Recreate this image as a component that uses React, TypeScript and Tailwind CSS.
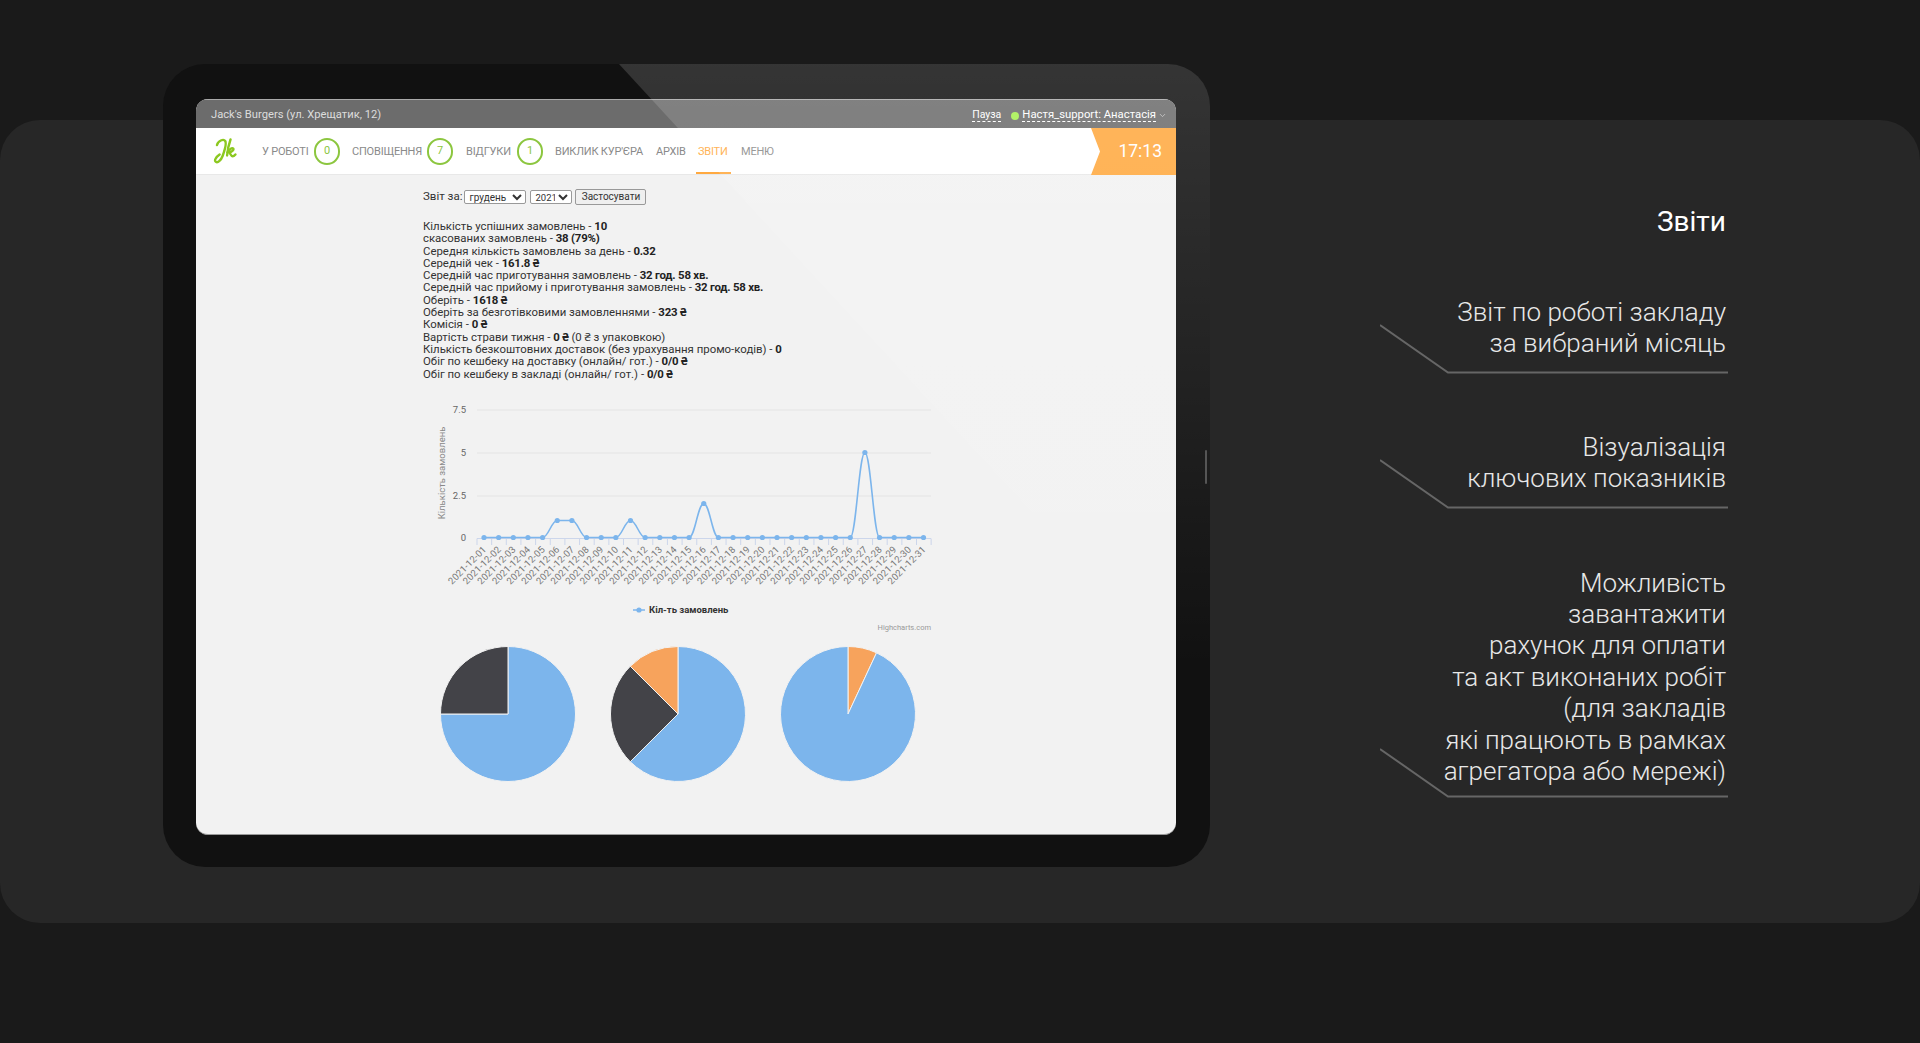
import { ChevronDown } from 'lucide-react';

const BLUE = '#7cb5ec';
const DARK = '#434348';
const ORANGE = '#f7a35c';

// values per day of the month (1..31)
const orders = Array.from({ length: 31 }, (_, i) => {
  const day = i + 1;
  if (day === 6 || day === 7 || day === 11) return 1;
  if (day === 16) return 2;
  if (day === 27) return 5;
  return 0;
});

const stats: [string, string, string?][] = [
  ['Кількість успішних замовлень - ', '10'],
  ['скасованих замовлень - ', '38 (79%)'],
  ['Середня кількість замовлень за день - ', '0.32'],
  ['Середній чек - ', '161.8 ₴'],
  ['Середній час приготування замовлень - ', '32 год. 58 хв.'],
  ['Середній час прийому і приготування замовлень - ', '32 год. 58 хв.'],
  ['Оберіть - ', '1618 ₴'],
  ['Оберіть за безготівковими замовленнями - ', '323 ₴'],
  ['Комісія - ', '0 ₴'],
  ['Вартість страви тижня - ', '0 ₴', ' (0 ₴ з упаковкою)'],
  ['Кількість безкоштовних доставок (без урахування промо-кодів) - ', '0'],
  ['Обіг по кешбеку на доставку (онлайн/ гот.) - ', '0/0 ₴'],
  ['Обіг по кешбеку в закладі (онлайн/ гот.) - ', '0/0 ₴'],
];

const pointX = (i: number) => 484 + i * 14.65;
const pointY = (v: number) => 537.5 - v * 17;

// same smoothing as a highcharts spline
function splinePath() {
  const pts = orders.map((v, i) => ({ x: pointX(i), y: pointY(v) }));
  const ctrl = pts.map((p, i) => {
    const prev = pts[i - 1];
    const next = pts[i + 1];
    if (!prev || !next) return { lx: p.x, ly: p.y, rx: p.x, ry: p.y };
    const lx = (1.5 * p.x + prev.x) / 2.5;
    const rx = (1.5 * p.x + next.x) / 2.5;
    let ly = (1.5 * p.y + prev.y) / 2.5;
    let ry = (1.5 * p.y + next.y) / 2.5;
    const c = ((ry - ly) * (rx - p.x)) / (rx - lx) + p.y - ry;
    ly += c;
    ry += c;
    if (ly > prev.y && ly > p.y) {
      ly = Math.max(prev.y, p.y);
      ry = 2 * p.y - ly;
    } else if (ly < prev.y && ly < p.y) {
      ly = Math.min(prev.y, p.y);
      ry = 2 * p.y - ly;
    }
    if (ry > next.y && ry > p.y) {
      ry = Math.max(next.y, p.y);
      ly = 2 * p.y - ry;
    } else if (ry < next.y && ry < p.y) {
      ry = Math.min(next.y, p.y);
      ly = 2 * p.y - ry;
    }
    return { lx, ly, rx, ry };
  });
  let d = `M${pts[0].x} ${pts[0].y}`;
  for (let i = 1; i < pts.length; i++) {
    d += ` C${ctrl[i - 1].rx} ${ctrl[i - 1].ry} ${ctrl[i].lx} ${ctrl[i].ly} ${pts[i].x} ${pts[i].y}`;
  }
  return d;
}

function LineChart() {
  return (
    <svg viewBox="423 400 510 235" className="block w-[510px] h-[235px] mt-[20px]" style={{ fontFamily: 'Roboto, sans-serif' }}>
      {[410, 453, 496].map((y) => (
        <line key={y} x1="477" x2="931" y1={y} y2={y} stroke="#e4e4e4" strokeWidth="1.2" />
      ))}
      {[['7.5', 413], ['5', 456], ['2.5', 499], ['0', 541]].map(([t, y]) => (
        <text key={t} x="466" y={y} textAnchor="end" fontSize="9.5" fill="#666">{t}</text>
      ))}
      <text transform="translate(445 473) rotate(-90)" textAnchor="middle" fontSize="9.5" fill="#888">Кількість замовлень</text>
      <line x1="477" x2="931" y1="538.5" y2="538.5" stroke="#ccd6eb" />
      {Array.from({ length: 32 }, (_, i) => (
        <line key={i} x1={477 + i * 14.65} x2={477 + i * 14.65} y1="538.5" y2="545" stroke="#ccd6eb" />
      ))}
      <path d={splinePath()} fill="none" stroke={BLUE} strokeWidth="1.6" />
      {orders.map((v, i) => (
        <circle key={i} cx={pointX(i)} cy={pointY(v)} r="2.6" fill={BLUE} />
      ))}
      {orders.map((_, i) => (
        <text
          key={i}
          transform={`translate(${pointX(i) + 3} 550) rotate(-45)`}
          textAnchor="end"
          fontSize="9.5"
          letterSpacing="0.15"
          fill="#777"
        >
          {`2021-12-${String(i + 1).padStart(2, '0')}`}
        </text>
      ))}
      <line x1="633" x2="645" y1="610" y2="610" stroke={BLUE} strokeWidth="1.5" />
      <circle cx="639" cy="610" r="2.6" fill={BLUE} />
      <text x="649" y="613" fontSize="9.5" fontWeight="700" fill="#333">Кіл-ть замовлень</text>
      <text x="931" y="630" textAnchor="end" fontSize="7.5" fill="#999">Highcharts.com</text>
    </svg>
  );
}

function slice(cx: number, cy: number, r: number, from: number, to: number) {
  const pt = (a: number) => {
    const rad = (a * Math.PI) / 180;
    return `${cx + r * Math.sin(rad)} ${cy - r * Math.cos(rad)}`;
  };
  return `M${cx} ${cy} L${pt(from)} A${r} ${r} 0 ${to - from > 180 ? 1 : 0} 1 ${pt(to)} Z`;
}

const pies: { cx: number; parts: [number, number, string][] }[] = [
  { cx: 508, parts: [[0, 270, BLUE], [270, 360, DARK]] },
  { cx: 678, parts: [[0, 225, BLUE], [225, 315, DARK], [315, 360, ORANGE]] },
  { cx: 848, parts: [[0, 25, ORANGE], [25, 360, BLUE]] },
];

function Pies() {
  return (
    <svg viewBox="423 635 510 150" className="block w-[510px] h-[150px]">
      {pies.map((p) =>
        p.parts.map(([from, to, color]) => (
          <path key={`${p.cx}-${from}`} d={slice(p.cx, 714, 67.5, from, to)} fill={color} stroke="#f2f2f2" strokeWidth="1" strokeLinejoin="round" />
        )),
      )}
    </svg>
  );
}

function Logo() {
  return (
    <svg viewBox="0 0 24 26" className="w-[24px] h-[26px] text-[#8cc820]" fill="none" stroke="currentColor" strokeWidth="2.4" strokeLinecap="round" strokeLinejoin="round">
      <path d="M4 7C5 2.800 10.500 .5 12.200 3c1.500 2.400-.6 9.500-2.600 15-1.500 4-4.600 7.200-6.800 5.800-1.900-1.300.4-5 3.800-7.300" />
      <path d="M17.500 1.500c-1.400 4-3 10-3.400 16" />
      <path d="M14.400 14.500c1.400-3 4.600-5.300 5.800-3.900 1 1.300-1.600 3.300-4 3.700 1.200 1 1.600 4 3.400 4 1 0 2-.8 2.800-1.800" />
    </svg>
  );
}

function Badge({ n }: { n: number }) {
  return (
    <span className="ml-[5px] flex h-[27px] w-[26px] items-center justify-center rounded-full border-2 border-[#8cc63f] text-[11px] text-[#8cc63f]">
      {n}
    </span>
  );
}

function NavBar() {
  const item = 'text-[11px] tracking-[-0.2px] text-[#8a8a8a] whitespace-nowrap pt-[2px]';
  return (
    <div className="relative flex h-[47px] items-center bg-white pl-[17px] border-b border-[#e8e8e8]">
      <Logo />
      <span className={`${item} ml-[25px] w-[47px]`}>У РОБОТІ</span>
      <Badge n={0} />
      <span className={`${item} ml-[12px] w-[70px]`}>СПОВІЩЕННЯ</span>
      <Badge n={7} />
      <span className={`${item} ml-[13px] w-[44px]`}>ВІДГУКИ</span>
      <span className="ml-[2px]"><Badge n={1} /></span>
      <span className={`${item} ml-[12px] w-[88px]`}>ВИКЛИК КУР'ЄРА</span>
      <span className={`${item} ml-[13px] w-[29px]`}>АРХІВ</span>
      <span className={`${item} ml-[13px] w-[30px] !text-[#ffa940]`}>ЗВІТИ</span>
      <span className={`${item} ml-[13px]`}>МЕНЮ</span>
      <span className="absolute bottom-0 left-[500px] h-[2px] w-[35px] bg-[#ffa940]" />
      <div className="absolute right-0 top-0 flex h-[47px] w-[85px] items-center justify-end bg-[#ffa940] pr-[14px] text-[17.500px] text-white [clip-path:polygon(0_0,100%_0,100%_100%,0_100%,9px_50%)]">
        17:13
      </div>
    </div>
  );
}

function Screen() {
  return (
    <div className="h-[736px] w-[980px] overflow-hidden rounded-[12px] bg-[#f2f2f2] border-b border-[#999]" style={{ fontFamily: 'Roboto, "Noto Sans", sans-serif' }}>
      <div className="flex h-[29px] items-center justify-between border-t border-[#aaa] bg-[#6c6c6c] pl-[15px] pr-[9px] pt-[3px] text-[11.200px] text-[#dcdcdc]">
        <span>Jack's Burgers (ул. Хрещатик, 12)</span>
        <div className="flex items-center">
          <span className="border-b border-dashed border-white text-[10.500px] leading-[12px] text-white">Пауза</span>
          <span className="ml-[10px] h-[8px] w-[8px] rounded-full bg-[#a6f050]" />
          <span className="ml-[3px] border-b border-dashed border-white text-[11.300px] leading-[12px] text-white">Настя_support: Анастасія</span>
          <ChevronDown size={9} className="ml-[2px] text-[#ccc]" />
        </div>
      </div>
      <NavBar />
      <div className="pl-[227px] pt-[13px] text-[#333]">
        <div className="flex h-[17px] items-center text-[11.500px]">
          <span className="mr-[2px]">Звіт за:</span>
          <select defaultValue="12" className="h-[14px] w-[62px] border border-[#999] rounded-[2px] bg-white text-[10px] leading-none">
            <option value="12">грудень</option>
          </select>
          <select defaultValue="2021" className="ml-[4px] h-[14px] w-[42px] border border-[#999] rounded-[2px] bg-white px-0 text-[9.500px] leading-none">
            <option value="2021">2021</option>
          </select>
          <button className="ml-[3px] h-[16px] w-[71px] border border-[#999] rounded-[2px] bg-[#efefef] text-[10px] leading-none">Застосувати</button>
        </div>
        <div className="mt-[15px] text-[11.400px] leading-[12.300px] whitespace-nowrap">
          {stats.map(([label, value, tail]) => (
            <div key={label}>
              {label}
              <b className="text-[#222] tracking-[-0.2px]">{value}</b>
              {tail}
            </div>
          ))}
        </div>
        <LineChart />
        <Pies />
      </div>
    </div>
  );
}

function Tablet() {
  return (
    <div className="relative -mt-[56px] ml-[163px] h-[803px] w-[1047px] shrink-0 overflow-hidden rounded-[42px] bg-[#111] pt-[35px] pl-[33px]">
      <Screen />
      {/* blik on the glass */}
      <div className="pointer-events-none absolute inset-0 bg-gradient-to-b from-white/15 to-white/0 to-[75%] [clip-path:polygon(456px_0,100%_0,100%_642px)]" />
      <div className="absolute right-[3px] top-[386px] h-[34px] w-[2px] rounded-full bg-[#555]" />
    </div>
  );
}

function Callout({ children, className, lineClass }: { children: React.ReactNode; className: string; lineClass: string }) {
  return (
    <div className={`relative text-right ${className}`}>
      {children}
      <svg viewBox="0 0 348 50" className={`absolute -right-[2px] h-[50px] w-[348px] ${lineClass}`}>
        <path d="M0 1L68 48.500H348" fill="none" stroke="#666" strokeWidth="2" />
      </svg>
    </div>
  );
}

export default function App() {
  return (
    <div className="h-[1043px] overflow-hidden bg-[#1a1a1a] pt-[120px]">
      <div className="flex h-[803px] rounded-[40px] bg-[#272727]">
        <Tablet />
        <div className="ml-auto w-[700px] pr-[194px] font-light text-[26px] leading-[31.400px] text-[#e8e8e8]" style={{ fontFamily: 'Roboto, sans-serif' }}>
          <div className="mt-[84px] text-right text-[28px] font-normal leading-[36px] text-white">Звіти</div>
          <Callout className="mt-[57px]" lineClass="-bottom-[14px]">
            Звіт по роботі закладу<br />за вибраний місяць
          </Callout>
          <Callout className="mt-[72px]" lineClass="-bottom-[14px]">
            Візуалізація<br />ключових показників
          </Callout>
          <Callout className="mt-[73px]" lineClass="-bottom-[11px]">
            Можливість<br />завантажити<br />рахунок для оплати<br />та акт виконаних робіт<br />(для закладів<br />які працюють в рамках<br />агрегатора або мережі)
          </Callout>
        </div>
      </div>
    </div>
  );
}
